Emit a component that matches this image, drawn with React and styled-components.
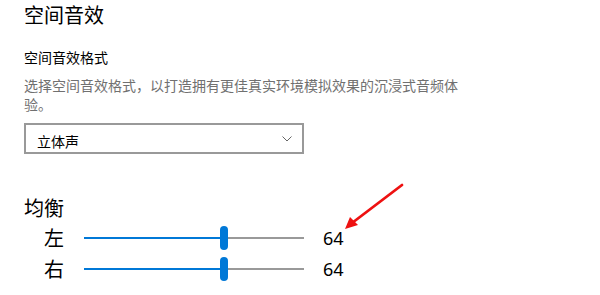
import React from 'react';
import styled, {createGlobalStyle} from 'styled-components';

const GlobalStyle = createGlobalStyle`
    body {
        margin:0;
        background:#fff;
        font-family:"Segoe UI", "Noto Sans", "Noto Sans CJK SC", sans-serif;
        color:#000;
    }
`

const App = () => {
    const balance = [
        {label:'左', value:64},
        {label:'右', value:64},
    ];

    return(
        <>
        <GlobalStyle/>
        <Page>
            <Title>空间音效</Title>
            <SubTitle>空间音效格式</SubTitle>
            <Description>
                选择空间音效格式，以打造拥有更佳真实环境模拟效果的沉浸式音频体验。
            </Description>
            <Select>
                <span>立体声</span>
                <svg width="10" height="6" viewBox="0 0 10 6">
                    <path d="M0.5 0.5 L5 5 L9.5 0.5" fill="none" stroke="#666" strokeWidth="1"/>
                </svg>
            </Select>

            <Section>均衡</Section>
            {balance.map((item, index) => <BalanceRow item={item} key={index}/>)}

            <Annotation width="70" height="55" viewBox="0 0 70 55">
                <line x1="62" y1="4" x2="12" y2="42" stroke="#ee1111" strokeWidth="2.8" strokeLinecap="round"/>
                <polygon points="5,48 10,36 18,44" fill="#ee1111"/>
            </Annotation>
        </Page>
        </>
    )
}

export default App;

const BalanceRow = ({ item }) => {
    const pct = item.value / 100;
    return(
        <SliderRow>
            <Label>{item.label}</Label>
            <Track>
                <Fill style={{width:`${pct * 100}%`}}/>
                <Thumb style={{left:`${pct * 212}px`}}/>
            </Track>
            <Value>{item.value}</Value>
        </SliderRow>
    )
}

const Page = styled.div`
    position:relative;
    width:600px;
    height:295px;
    box-sizing:border-box;
    padding:1px 24px 0;
    overflow:hidden;
`

const Title = styled.div`
    font-family:"Noto Sans CJK SC", sans-serif;
    font-size:20px;
    line-height:28px;
`

const SubTitle = styled.div`
    margin-top:18px;
    font-family:"Noto Sans CJK SC", sans-serif;
    font-size:14px;
    line-height:20px;
`

const Description = styled.div`
    margin-top:9px;
    width:445px;
    font-family:"Noto Sans CJK SC", sans-serif;
    font-size:14px;
    line-height:19px;
    color:#707070;
`

const Select = styled.div`
    margin-top:9px;
    width:280px;
    height:31px;
    box-sizing:border-box;
    border:2px solid #999;
    display:flex;
    align-items:center;
    justify-content:space-between;
    padding:4px 10px 0 11px;

    & > span {
        font-family:"Noto Sans CJK SC", sans-serif;
        font-size:14px;
        line-height:20px;
    }
    & > svg {
        margin-top:-4px;
    }
`

const Section = styled.div`
    margin-top:40px;
    font-family:"Noto Sans CJK SC", sans-serif;
    font-size:20px;
    line-height:28px;
`

const SliderRow = styled.div`
    display:grid;
    grid-template-columns:60px 220px auto;
    align-items:center;
    height:31px;
`

const Label = styled.div`
    text-align:right;
    padding-right:20px;
    font-family:"Noto Sans CJK SC", sans-serif;
    font-size:20px;
    line-height:28px;
`

const Track = styled.div`
    position:relative;
    height:2px;
    background:#999;
`

const Fill = styled.div`
    height:100%;
    background:#0078d7;
`

const Thumb = styled.div`
    position:absolute;
    top:-11px;
    width:8px;
    height:24px;
    border-radius:4px;
    background:#0078d7;
`

const Value = styled.div`
    padding-left:19px;
    font-size:18px;
    line-height:24px;
`

const Annotation = styled.svg`
    position:absolute;
    left:340px;
    top:181px;
`
